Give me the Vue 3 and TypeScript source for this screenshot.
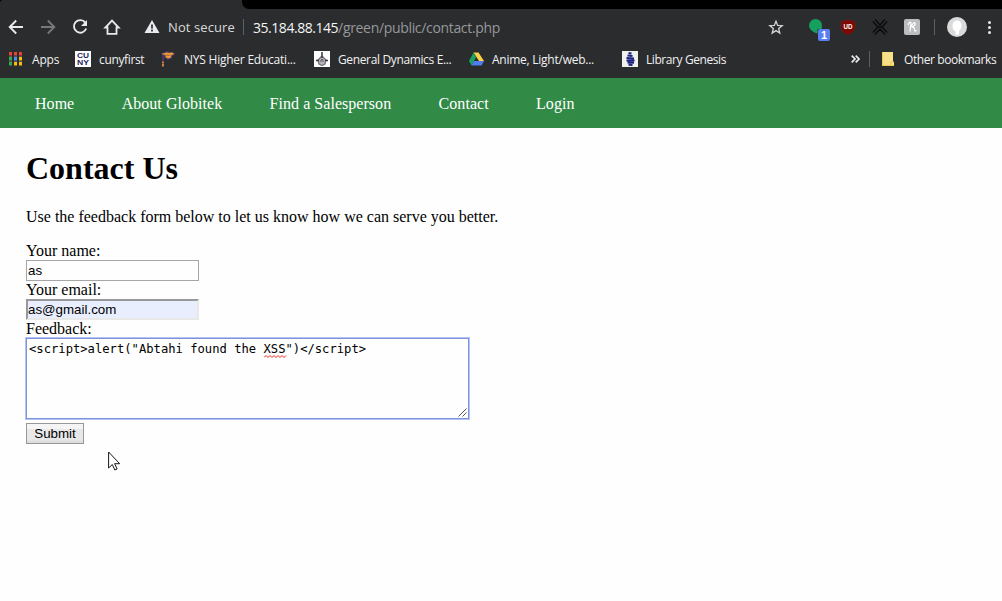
<script setup lang="ts">
interface Bookmark { id: string; label: string; spacing: string }

const bookmarks: Bookmark[] = [
  { id: 'apps', label: 'Apps', spacing: '-0.2px' },
  { id: 'cuny', label: 'cunyfirst', spacing: '-0.35px' },
  { id: 'nys', label: 'NYS Higher Educati...', spacing: '-0.23px' },
  { id: 'gd', label: 'General Dynamics E...', spacing: '-0.36px' },
  { id: 'drive', label: 'Anime, Light/web...', spacing: '-0.25px' },
  { id: 'libgen', label: 'Library Genesis', spacing: '-0.42px' },
]
const navLinks: string[] = ['Home', 'About Globitek', 'Find a Salesperson', 'Contact', 'Login']
const appColors: string[] = ['#ea4335', '#ea4335', '#ea4335', '#34a853', '#4a8df5', '#fbbc05', '#34a853', '#fbbc05', '#fbbc05']
</script>

<template>
  <div class="window">
    <header class="chrome">
      <div class="tabstrip"><div class="tab"></div><div class="strip-rest"><i></i></div></div>
      <div class="toolbar">
        <svg class="nav-icons" width="124" height="36" viewBox="0 0 124 36" fill="none" stroke="#e8eaed" stroke-width="1.9">
          <path d="M23 18H10M16.2 11.5L9.7 18l6.500 6.500" />
          <path d="M41 18h13M47.800 11.500l6.500 6.500-6.500 6.500" stroke="#77787a" />
          <path d="M85.300 13.600A6.300 6.300 0 1 0 86.200 19.500" />
          <path d="M87 11v6h-6z" fill="#e8eaed" stroke="none" />
          <path d="M105.300 18.500H107.500V24.800H116.500V18.500H118.700L112 11.600Z" stroke-width="1.800" />
        </svg>
        <svg class="warn" width="16" height="14" viewBox="0 0 16 14"><path d="M8 0L15.500 13H.5z" fill="#e8eaed" /><path d="M8 4.500v4M8 9.500v2" stroke="#2b2c2e" stroke-width="1.700" /></svg>
        <span class="insecure">Not secure</span>
        <i class="divider url-divider"></i>
        <span class="url"><b>35.184.88.145</b>/green/public/contact.php</span>
        <svg class="actions" width="242" height="36" viewBox="760 9 242 36">
          <path d="M776 21.200l1.700 4.200 4.500.3-3.500 2.900 1.100 4.400-3.800-2.400-3.800 2.400 1.100-4.400-3.500-2.900 4.500-.3z" fill="none" stroke="#d5d6d8" stroke-width="1.300" />
          <path d="M815.500 19a6.500 6.500 0 0 1 6.500 7l-.5 3h-4v4.500c-4-1-8.500-4-8.500-8a6.500 6.500 0 0 1 6.500-6.500z" fill="#16a05d" />
          <rect x="818" y="29" width="12" height="12" rx="2" fill="#5b7ff0" />
          <text x="824" y="39" font-size="11" font-weight="700" fill="#fff" text-anchor="middle">1</text>
          <path d="M848 19.300c2 1.500 4.500 2 7 2v5.500c0 4-3 6.200-7 8-4-1.800-7-4-7-8v-5.500c2.500 0 5-.5 7-2z" fill="#800600" stroke="#6a2220" stroke-width=".7" />
          <text x="848" y="29.200" font-size="7" font-weight="700" fill="#fff" text-anchor="middle" textLength="9" lengthAdjust="spacingAndGlyphs">UD</text>
          <path d="M875 19.500L880 25l5-5.500M875 34.500L880 29l5 5.500M872.800 21.500l5.200 5.500-5.200 5.500M887.200 21.500l-5.200 5.500 5.200 5.500M878 27l4 0" fill="none" stroke="#090a0b" stroke-width="1.300" />
          <rect x="904" y="19" width="16" height="16" rx="2" fill="#bdbdbd" />
          <path d="M908 25c.8-2.500 2.800-4 3-1.500l-1 8M909.500 27.500c2.500-1 3.800-6 5.500-4.500 1.200 1.200-1 3.500-3.300 4 2.500 0 2.800 1 2.800 2.500 0 1.800.8 2 2 1" fill="none" stroke="#fff" stroke-width="1.200" />
          <path d="M934.500 19v16" stroke="#5e5f61" />
          <circle cx="957" cy="27" r="10" fill="#dadada" />
          <path d="M957 20.500c3 0 4.500 2 4.500 5s-1.500 5-2.300 5.300L959 34.500l-3.500.500v-3.500c-2-1-3-3-3-6s1.500-5 4.500-5z" fill="#fff" />
          <g fill="#e8eaed"><circle cx="989.500" cy="22.500" r="1.500" /><circle cx="989.500" cy="27.500" r="1.500" /><circle cx="989.500" cy="32.500" r="1.500" /></g>
        </svg>
      </div>
      <div class="bookmarks">
        <div class="bookmark-list">
          <div v-for="b in bookmarks" :key="b.id" class="bookmark">
            <svg width="16" height="16" viewBox="0 0 16 16">
              <template v-if="b.id === 'apps'">
                <rect v-for="(c, i) in appColors" :key="i" :x="1 + (i % 3) * 5" :y="1 + Math.floor(i / 3) * 5" width="3" height="3.500" :fill="c" />
                <path d="M1 5.500h13M1 10.500h13" stroke="#68695f" stroke-dasharray="3 2" stroke-width=".7" />
              </template>
              <template v-else-if="b.id === 'cuny'">
                <rect width="16" height="16" fill="#fff" />
                <text class="cuny" x="8" y="7.200" textLength="12" lengthAdjust="spacingAndGlyphs">CU</text>
                <text class="cuny" x="8" y="14.200" textLength="12" lengthAdjust="spacingAndGlyphs">NY</text>
              </template>
              <template v-else-if="b.id === 'nys'">
                <path d="M1.500 3L7.500 1l6.500 2-2.500 2v1.500L8 8 5 6.500V4.500L3 3.500v7" fill="none" stroke="#5b3f78" stroke-width="1.200" />
                <path d="M1.500 3l5-1.500 2 .5 4-.5 1.500 1.500-3 1.500v2L8 7.500 5.500 6V4z" fill="#f09a35" />
                <path d="M6 3.800l2 .8 2.500-.8" fill="none" stroke="#7b4f48" stroke-width=".7" />
                <path d="M3 10.500V12M3 12.500v3" stroke="#e08a3a" stroke-width="1.800" />
              </template>
              <template v-else-if="b.id === 'gd'">
                <rect width="16" height="16" fill="#fff" />
                <path d="M8 5l4 4-1 4-3 1.500L5 13 4 9z" fill="#b9b4b8" stroke="#77727a" stroke-width="1.300" />
                <path d="M8 1v6M2 9.500h3M11 9.500h3M8 8v3" stroke="#3c3a4a" stroke-width="1.500" />
                <path d="M6 10h4" stroke="#8d878e" stroke-width="2" />
              </template>
              <template v-else-if="b.id === 'drive'">
                <path d="M5.500 1.500h5L16 10h-5z" fill="#fbd04b" />
                <path d="M5.500 1.500L1 10l2.500 4.500L8.200 6z" fill="#1ba261" />
                <path d="M6 10h10l-2.500 4.500h-10z" fill="#4f7df0" />
              </template>
              <template v-else>
                <rect width="16" height="16" fill="#f1f1ec" />
                <path d="M6.500 2l3 .5M5.500 4.500l5 .5M4.500 7l7.500.5M4.500 9.500h8M5.500 11.500l6.500.300M6.500 13.800l4 .2" stroke="#1c2280" stroke-width="2" />
              </template>
            </svg>
            <span :style="{ letterSpacing: b.spacing }">{{ b.label }}</span>
          </div>
        </div>
        <svg class="more" width="9" height="8" viewBox="0 0 9 8"><path d="M.7.700L4 4 .7 7.300M4.700.700L8 4 4.700 7.300" fill="none" stroke="#e8eaed" stroke-width="1.700" /></svg>
        <i class="divider"></i>
        <svg class="folder" width="12" height="14" viewBox="0 0 12 14"><path d="M0 0h11v10h1v4H0z" fill="#f8e08a" /><path d="M0 13.500h12M9 13v-3h3M.5 0v14" stroke="#edc64b" fill="none" /></svg>
        <span class="other">Other bookmarks</span>
      </div>
    </header>

    <nav class="site-nav"><a v-for="l in navLinks" :key="l">{{ l }}</a></nav>

    <main>
      <h1>Contact Us</h1>
      <p>Use the feedback form below to let us know how we can serve you better.</p>
      <form>
        <label>Your name:</label>
        <div class="field">as</div>
        <label>Your email:</label>
        <div class="field autofill">as@gmail.com</div>
        <label>Feedback:</label>
        <div class="textarea">&lt;script&gt;alert("Abtahi found the <span class="xss">XSS<svg width="23" height="3" viewBox="0 0 23 3"><path d="M0 2.500L2 .5l2 2 2-2 2 2 2-2 2 2 2-2 2 2 2-2 2 2 2-2" fill="none" stroke="#f0281c" /></svg></span>")&lt;/script&gt;
          <svg class="grip" width="9" height="9" viewBox="0 0 9 9"><path d="M.5 8.500l8-8M4.500 8.500l4-4" stroke="#555" /></svg>
        </div>
        <button type="button">Submit</button>
      </form>
    </main>
    <svg class="cursor" width="13" height="21" viewBox="0 0 13 21"><path d="M.6 1v16l3.700-3.500 2.500 5.500 2.300-1-2.500-5.300h5.100z" fill="#fff" stroke="#16161f" /></svg>
  </div>
</template>

<style>
body { margin: 0; overflow: hidden; }
</style>
<style scoped>
.window { position: relative; width: 1002px; height: 601px; background: #fefefe; overflow: hidden; font-family: "Liberation Serif", serif; }
.chrome { height: 78px; background: #2b2c2e; color: #f1f1f2; font-family: "Open Sans", "Noto Sans", sans-serif; white-space: nowrap; }
.tabstrip { display: flex; height: 9px; background: #000; }
.tab { width: 242px; background: #2b2c2e; border-top-left-radius: 3px; }
.strip-rest { flex: 1; background: #2b2c2e; }
.strip-rest i { display: block; height: 9px; background: #000; border-bottom-left-radius: 7px; }
.toolbar { display: flex; align-items: center; height: 36px; }
.nav-icons { flex: none; }
.warn { margin-left: 20px; flex: none; }
.insecure { width: 67px; margin-left: 8px; font-size: 13px; letter-spacing: 0.1px; color: #dadbdc; }
.divider { width: 1px; height: 16px; background: #5e5f61; flex: none; }
.url-divider { margin-left: 8px; }
.url { margin-left: 9px; font-size: 14px; color: #96989b; letter-spacing: -0.330px; }
.url b { font-weight: 400; color: #f5f5f5; letter-spacing: -0.460px; }
.actions { margin-left: auto; font-family: "Liberation Sans", sans-serif; }
.bookmarks { display: flex; align-items: center; height: 28px; font-size: 12px; }
.bookmark-list { display: grid; grid-template-columns: 67px 85px 154px 154px 154px 130px; margin-left: 8px; }
.bookmark { display: flex; align-items: center; gap: 8px; }
.bookmark svg { flex: none; }
.cuny { font: bold 8px "Liberation Sans", sans-serif; fill: #1b2763; text-anchor: middle; }
.more { margin-left: 99px; margin-right: 9px; }
.folder { margin-left: 12px; }
.other { margin-left: 10px; letter-spacing: -0.420px; }
.site-nav { display: flex; align-items: center; gap: 47.400px; height: 50px; padding: 2px 0 0 35px; box-sizing: border-box; background: #328a47; color: #fff; font-size: 16px; letter-spacing: 0.040px; }
main { padding: 0 26px; color: #000; }
h1 { margin: 0; padding-top: 22px; font-size: 32px; line-height: 37px; }
p { margin: 21px 0 0; font-size: 16px; line-height: 18px; }
form { display: flex; flex-direction: column; align-items: flex-start; margin-top: 16px; }
label { font-size: 16px; line-height: 18px; }
.field { box-sizing: border-box; width: 173px; height: 21px; border: 1px solid #a6a6a6; padding-left: 1px; font: 13.330px/19px "Liberation Sans", sans-serif; }
.autofill { border: 2px solid; border-color: #999 #e8e8e8 #e8e8e8 #999; background: #e8eefd; padding-left: 0; line-height: 17px; }
.textarea { position: relative; box-sizing: border-box; width: 443px; height: 81px; border: 1px solid #7b94da; box-shadow: 0 0 0 1px #b3c2f2; padding: 3px 2px; font: 12.180px/15px "DejaVu Sans Mono", monospace; white-space: nowrap; }
.xss { position: relative; }
.xss svg { position: absolute; left: 0; bottom: -2px; }
.grip { position: absolute; right: 1px; bottom: 1px; }
button { width: 58px; height: 21px; margin: 4px 0 0; padding: 0; border: 1px solid #989898; border-radius: 0; background: linear-gradient(#f5f5f5 0 28%, #e8e8e8 28% 80%, #dadada); font: 13.330px/17px "Liberation Sans", sans-serif; color: #000; }
.cursor { position: absolute; left: 108px; top: 451px; }
</style>
